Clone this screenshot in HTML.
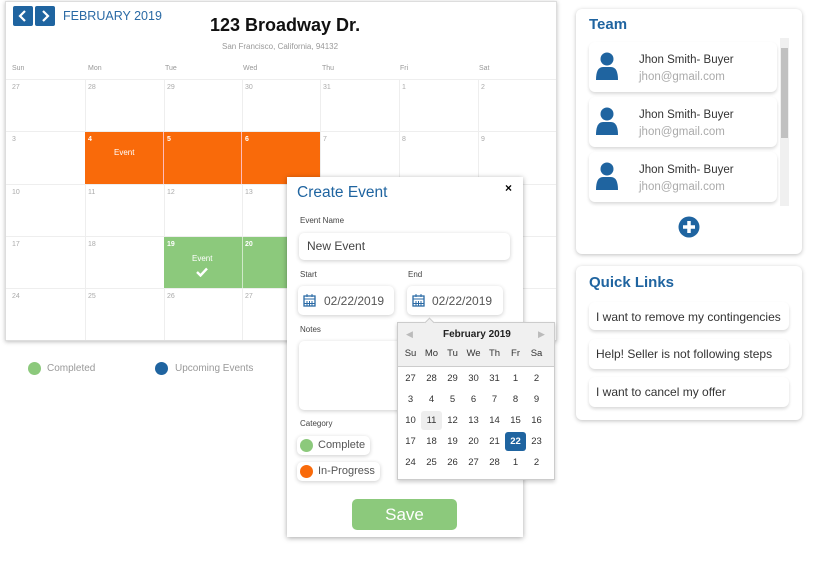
<!DOCTYPE html>
<html><head><meta charset="utf-8"><style>
*{box-sizing:border-box;margin:0;padding:0}
body{width:815px;height:572px;background:#fff;font-family:"Liberation Sans",sans-serif;position:relative;overflow:hidden}
.abs{position:absolute}
.cal{left:5px;top:1px;width:552px;height:340px;border:1px solid #ddd;box-shadow:0 1px 4px rgba(0,0,0,.25);background:#fff}
.btn{width:20px;height:20px;background:#1f64a0;border-radius:2px;color:#fff;text-align:center}
.dh{font-size:7px;color:#999;top:65px}
.vl{width:1px;background:#eee;top:79px;height:261px}
.hl{height:1px;background:#eee;left:6px;width:550px}
.dn{font-size:7px;color:#aaa}
.card{background:#fff;border-radius:6px;box-shadow:0 1px 4px rgba(0,0,0,.25)}
.item{background:#fff;border-radius:6px;box-shadow:0 2px 3px rgba(0,0,0,.15)}
.h{color:#1f64a0;font-weight:bold;font-size:15px}
.lbl{font-size:8px;color:#444}
.pill{background:#fff;border-radius:5px;box-shadow:0 1px 4px rgba(0,0,0,.2)}
.dp td{text-align:center;font-size:9.5px;color:#333;width:21px;height:21px}
</style></head><body>
<div class="abs cal"></div>
<div class="abs btn" style="left:13px;top:6px"><svg width="20" height="20"><path d="M12 5L7 10L12 15" stroke="#fff" stroke-width="2.2" fill="none"/></svg></div>
<div class="abs btn" style="left:35px;top:6px"><svg width="20" height="20"><path d="M8 5L13 10L8 15" stroke="#fff" stroke-width="2.2" fill="none"/></svg></div>
<div class="abs" style="left:63px;top:9px;font-size:12.5px;color:#2a6aa5">FEBRUARY 2019</div>
<div class="abs" style="left:210px;top:15px;font-size:18px;font-weight:600;color:#111">123 Broadway Dr.</div>
<div class="abs" style="left:222px;top:42px;font-size:8px;color:#999">San Francisco, California, 94132</div>
<div class="abs dh" style="left:12px">Sun</div><div class="abs dh" style="left:88px">Mon</div><div class="abs dh" style="left:165px">Tue</div><div class="abs dh" style="left:243px">Wed</div><div class="abs dh" style="left:322px">Thu</div><div class="abs dh" style="left:400px">Fri</div><div class="abs dh" style="left:479px">Sat</div>
<div class="abs hl" style="top:79px"></div><div class="abs hl" style="top:131px"></div><div class="abs hl" style="top:184px"></div><div class="abs hl" style="top:236px"></div><div class="abs hl" style="top:288px"></div>
<div class="abs vl" style="left:85px"></div><div class="abs vl" style="left:164px"></div><div class="abs vl" style="left:242px"></div><div class="abs vl" style="left:320px"></div><div class="abs vl" style="left:399px"></div><div class="abs vl" style="left:478px"></div>
<div class="abs" style="left:85px;top:132px;width:235px;height:52px;background:#f96a0a"></div>
<div class="abs" style="left:163px;top:132px;width:1px;height:52px;background:#fbb"></div><div class="abs" style="left:241px;top:132px;width:1px;height:52px;background:#fbb"></div>
<div class="abs" style="left:164px;top:237px;width:156px;height:51px;background:#8cc97c"></div>
<div class="abs" style="left:242px;top:237px;width:1px;height:51px;background:#cfe9c8"></div>
<div class="abs" style="left:114px;top:148px;font-size:8px;color:#fff">Event</div>
<div class="abs" style="left:192px;top:254px;font-size:8px;color:#fff">Event</div>
<div class="abs" style="left:196px;top:264px"><svg width="12" height="10"><path d="M1 5L4.5 8.5L11 1.5" stroke="#fff" stroke-width="2.4" fill="none"/></svg></div>
<div id="nums"></div>
<script>
var rows=[[27,28,29,30,31,1,2],[3,4,5,6,7,8,9],[10,11,12,13,14,15,16],[17,18,19,20,21,22,23],[24,25,26,27,28,1,2]];
var xs=[12,88,167,245,323,402,481],ys=[84,136,189,241,293],h='';
rows.forEach(function(r,i){r.forEach(function(n,j){var w=(i==1&&j>=1&&j<=3)||(i==3&&j>=2&&j<=3);h+='<div class="abs dn" style="left:'+xs[j]+'px;top:'+ys[i]+'px;'+(w?'color:#fff;font-weight:bold':'')+'">'+n+'</div>';});});
document.getElementById('nums').innerHTML=h;
</script>
<div class="abs" style="left:28px;top:362px;width:13px;height:13px;border-radius:50%;background:#8cc97c"></div>
<div class="abs" style="left:47px;top:363px;font-size:10px;color:#999">Completed</div>
<div class="abs" style="left:155px;top:362px;width:13px;height:13px;border-radius:50%;background:#1f64a0"></div>
<div class="abs" style="left:175px;top:363px;font-size:10px;color:#999">Upcoming Events</div>

<div class="abs card" style="left:576px;top:9px;width:226px;height:245px"></div>
<div class="abs h" style="left:589px;top:16px">Team</div>
<div class="abs" style="left:780px;top:38px;width:9px;height:168px;background:#f0f0f0"></div>
<div class="abs" style="left:781px;top:48px;width:7px;height:90px;background:#c1c1c1"></div>
<div id="team"></div>
<script>
var t='';[42,97,152].forEach(function(y){t+='<div class="abs item" style="left:589px;top:'+y+'px;width:188px;height:50px"></div><svg class="abs" style="left:595px;top:'+(y+10)+'px" width="25" height="30"><circle cx="12" cy="7" r="6.5" fill="#1f64a0"/><path d="M1 28Q1 15 8 15L16 15Q23 15 23 28Z" fill="#1f64a0"/></svg><div class="abs" style="left:639px;top:'+(y+12)+'px;font-size:11.5px;color:#333">Jhon Smith- Buyer</div><div class="abs" style="left:639px;top:'+(y+29)+'px;font-size:11.5px;color:#aaa">jhon@gmail.com</div>';});
document.getElementById('team').innerHTML=t;
</script>
<svg class="abs" style="left:678px;top:216px" width="22" height="22"><circle cx="11" cy="11" r="10.5" fill="#1f64a0"/><path d="M11 5V17M5 11H17" stroke="#fff" stroke-width="3.5"/></svg>
<div class="abs card" style="left:576px;top:266px;width:226px;height:154px"></div>
<div class="abs h" style="left:589px;top:274px">Quick Links</div>
<div class="abs item" style="left:589px;top:302px;width:200px;height:28px"></div><div class="abs" style="left:596px;top:310px;font-size:12px;color:#333">I want to remove my contingencies</div>
<div class="abs item" style="left:589px;top:339px;width:200px;height:30px"></div><div class="abs" style="left:596px;top:347px;font-size:12px;color:#333">Help! Seller is not following steps</div>
<div class="abs item" style="left:589px;top:377px;width:200px;height:30px"></div><div class="abs" style="left:596px;top:385px;font-size:12px;color:#333">I want to cancel my offer</div>

<div class="abs" style="left:287px;top:177px;width:236px;height:360px;background:#fff;box-shadow:0 1px 5px rgba(0,0,0,.35)"></div>
<div class="abs" style="left:297px;top:184px;font-size:15.5px;color:#1f64a0">Create Event</div>
<div class="abs" style="left:505px;top:181px;font-size:12px;font-weight:bold">×</div>
<div class="abs lbl" style="left:300px;top:216px">Event Name</div>
<div class="abs pill" style="left:299px;top:233px;width:211px;height:27px"></div>
<div class="abs" style="left:307px;top:239px;font-size:12px;color:#444">New Event</div>
<div class="abs lbl" style="left:300px;top:270px">Start</div><div class="abs lbl" style="left:408px;top:270px">End</div>
<div class="abs pill" style="left:298px;top:286px;width:96px;height:29px"></div>
<div class="abs pill" style="left:407px;top:286px;width:96px;height:29px"></div>
<svg class="abs" style="left:303px;top:294px" width="13" height="13"><rect x="1" y="2" width="11" height="10" fill="none" stroke="#2a6aa5" stroke-width="1.3"/><path d="M1 5H12M4 7V12M6.5 7V12M9 7V12M1 9.5H12M4 0V3M9 0V3" stroke="#2a6aa5" stroke-width="1"/></svg>
<svg class="abs" style="left:412px;top:294px" width="13" height="13"><rect x="1" y="2" width="11" height="10" fill="none" stroke="#2a6aa5" stroke-width="1.3"/><path d="M1 5H12M4 7V12M6.5 7V12M9 7V12M1 9.5H12M4 0V3M9 0V3" stroke="#2a6aa5" stroke-width="1"/></svg>
<div class="abs" style="left:324px;top:294px;font-size:12px;color:#555">02/22/2019</div>
<div class="abs" style="left:432px;top:294px;font-size:12px;color:#555">02/22/2019</div>
<div class="abs lbl" style="left:300px;top:325px">Notes</div>
<div class="abs pill" style="left:299px;top:341px;width:110px;height:69px"></div>
<div class="abs lbl" style="left:300px;top:419px">Category</div>
<div class="abs pill" style="left:297px;top:436px;width:73px;height:19px"></div>
<div class="abs" style="left:300px;top:439px;width:13px;height:13px;border-radius:50%;background:#8cc97c"></div>
<div class="abs" style="left:318px;top:439px;font-size:11px;color:#555">Complete</div>
<div class="abs pill" style="left:297px;top:462px;width:83px;height:19px"></div>
<div class="abs" style="left:300px;top:465px;width:13px;height:13px;border-radius:50%;background:#f96a0a"></div>
<div class="abs" style="left:318px;top:465px;font-size:11px;color:#555">In-Progress</div>
<div class="abs" style="left:352px;top:499px;width:105px;height:31px;background:#8cc97c;border-radius:5px;color:#fff;font-size:17px;text-align:center;line-height:31px">Save</div>

<div class="abs" style="left:397px;top:322px;width:158px;height:158px;background:#fff;border:1px solid #ccc;box-shadow:0 2px 4px rgba(0,0,0,.2)"></div>
<div class="abs" style="left:398px;top:323px;width:156px;height:44px;background:#f0f0f0;border-bottom:1px solid #ccc"></div>
<div class="abs" style="left:426px;top:319px;width:7px;height:7px;background:#f0f0f0;border-left:1px solid #ccc;border-top:1px solid #ccc;transform:rotate(45deg)"></div>
<div class="abs" style="left:406px;top:329px;font-size:9px;color:#bbb">◀</div><div class="abs" style="left:538px;top:329px;font-size:9px;color:#bbb">▶</div>
<div class="abs" style="left:443px;top:329px;font-size:10px;font-weight:bold;color:#222">February 2019</div>
<table class="abs dp" style="left:400px;top:343px;border-collapse:collapse"><tr><td style="height:21px">Su</td><td>Mo</td><td>Tu</td><td>We</td><td>Th</td><td>Fr</td><td>Sa</td></tr></table>
<table class="abs dp" style="left:400px;top:368px;border-collapse:collapse">
<tr><td>27</td><td>28</td><td>29</td><td>30</td><td>31</td><td>1</td><td>2</td></tr>
<tr><td>3</td><td>4</td><td>5</td><td>6</td><td>7</td><td>8</td><td>9</td></tr>
<tr><td>10</td><td><div style="background:#eee;border-radius:3px;height:19px;line-height:19px">11</div></td><td>12</td><td>13</td><td>14</td><td>15</td><td>16</td></tr>
<tr><td>17</td><td>18</td><td>19</td><td>20</td><td>21</td><td><div style="background:#1f64a0;color:#fff;font-weight:bold;border-radius:3px;height:19px;line-height:19px">22</div></td><td>23</td></tr>
<tr><td>24</td><td>25</td><td>26</td><td>27</td><td>28</td><td>1</td><td>2</td></tr>
</table>
</body></html>
